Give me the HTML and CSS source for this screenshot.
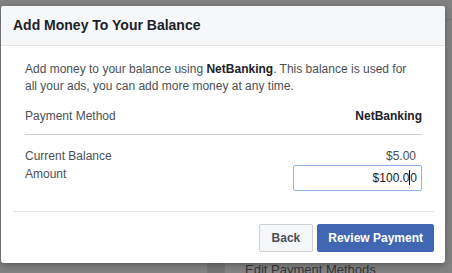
FILE: index.html
```html
<!DOCTYPE html>
<html>
<head>
  <meta charset="UTF-8">
  <title>Add Money To Your Balance</title>
  <link rel="stylesheet" href="styles.css">
</head>
<body>
  <div class="page">
    <div class="page-bar"></div>
    <div class="page-row">
      <span class="page-icon"></span>
      <span class="page-link">Edit Payment Methods</span>
    </div>
  </div>

  <div class="dialog">
    <div class="dialog-head">Add Money To Your Balance</div>

    <div class="dialog-body">
      <p class="intro">Add money to your balance using <b>NetBanking</b>. This balance is used for all your ads, you can add more money at any time.</p>

      <div class="row method">
        <span>Payment Method</span>
        <b>NetBanking</b>
      </div>

      <div class="row">
        <span>Current Balance</span>
        <span class="value">$5.00</span>
      </div>
      <div class="row">
        <span>Amount</span>
        <div class="amount">$100.0<span class="caret"></span>0</div>
      </div>
    </div>

    <div class="dialog-foot">
      <button class="btn back">Back</button>
      <button class="btn primary">Review Payment</button>
    </div>
  </div>
</body>
</html>
```

FILE: styles.css
```css
body {
  margin: 0;
  background: #818181;
  font-family: "Liberation Sans", Arial, sans-serif;
  font-size: 12px;
  color: #4b4f56;
}
.page {
  height: 273px;
  display: flex;
  flex-direction: column;
  justify-content: space-between;
}
.page-bar {
  height: 19px;
  border-bottom: 1px solid #6f6f6f;
}
.page-row {
  display: flex;
  align-items: flex-end;
  height: 11px;
  padding-left: 207px;
}
.page-icon {
  width: 18px;
  height: 11px;
  background: #747474;
}
.page-link {
  margin-left: 20px;
  font-size: 13px;
  line-height: 15px;
  color: #33353a;
  height: 11px;
  overflow: hidden;
}
.dialog {
  position: absolute;
  left: 1px;
  top: 6px;
  width: 444px;
  height: 257px;
  background: #fff;
  border-radius: 3px;
  box-shadow: 0 2px 6px rgba(0, 0, 0, .3);
  display: flex;
  flex-direction: column;
}
.dialog-head {
  height: 39px;
  line-height: 39px;
  padding-left: 12px;
  background: #f6f7f9;
  border-bottom: 1px solid #e5e5e5;
  border-radius: 3px 3px 0 0;
  font-size: 14px;
  font-weight: bold;
  color: #1d2129;
}
.dialog-body {
  padding: 15px 23px 0 24px;
  flex: 1;
}
.intro {
  margin: 0 0 13px;
  max-width: 392px;
  line-height: 17px;
}
.intro b, .method b {
  color: #1d2129;
}
.row {
  display: flex;
  justify-content: space-between;
  align-items: flex-start;
  line-height: 18px;
}
.method {
  line-height: 17px;
  padding-bottom: 9px;
  border-bottom: 1px solid #ccd0d5;
  margin-bottom: 12px;
}
.value {
  padding-right: 6px;
}
.amount {
  width: 123px;
  height: 24px;
  line-height: 24px;
  border: 1px solid #8eb3eb;
  border-radius: 2px;
  padding-right: 4px;
  text-align: right;
  color: #1d2129;
}
.caret {
  display: inline-block;
  width: 1px;
  height: 15px;
  background: #000;
  vertical-align: -3px;
}
.dialog-foot {
  margin: 0 11px 0 12px;
  padding: 12px 0 11px;
  border-top: 1px solid #e5e5e5;
  display: flex;
  justify-content: flex-end;
  gap: 4px;
}
.btn {
  height: 28px;
  padding: 0 10px;
  border: 1px solid #ced0d4;
  border-radius: 2px;
  background: #f6f7f9;
  color: #4b4f56;
  font-family: "Liberation Sans", Arial, sans-serif;
  font-size: 12px;
  font-weight: bold;
}
.back {
  padding: 0 12px;
}
.primary {
  background: #4267b2;
  border-color: #4267b2;
  color: #fff;
}
```
